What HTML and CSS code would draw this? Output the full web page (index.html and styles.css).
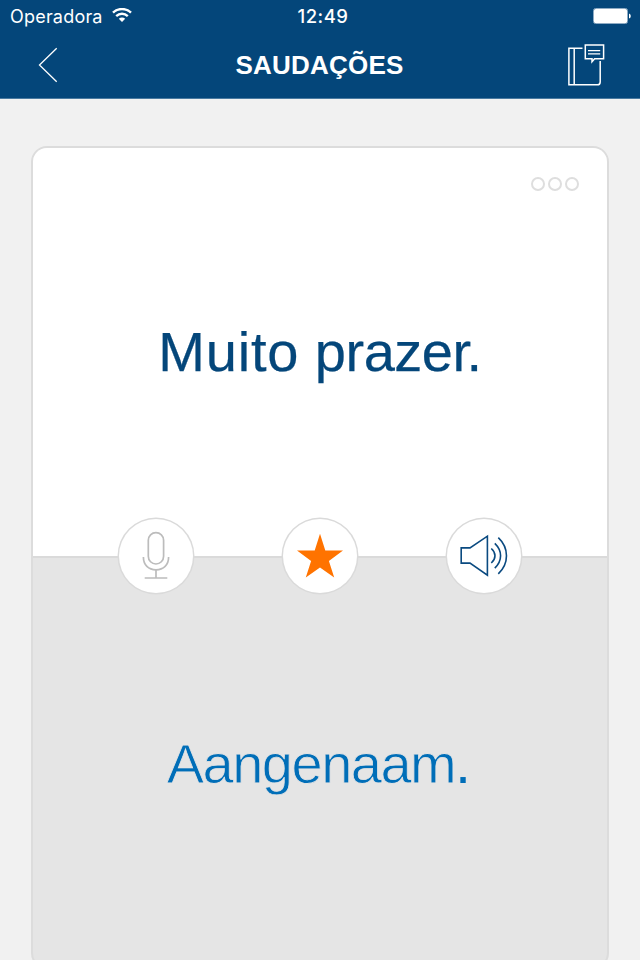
FILE: index.html
```html
<!DOCTYPE html>
<html lang="pt">
<head>
    <meta charset="UTF-8">
    <meta name="viewport" content="width=device-width, initial-scale=1.0">
    <title>Saudações</title>
    <link rel="stylesheet" href="styles.css">
</head>
<body>
    <header class="top">
        <div class="status-bar">
            <div class="carrier">
                <span class="carrier-name">Operadora</span>
                <svg class="wifi" width="20" height="14" viewBox="0 0 20 14" fill="none" stroke="#fff" stroke-width="2.4">
                    <path d="M1 4.7C6 -0.2 14 -0.2 19 4.7"/>
                    <path d="M4.2 8.2C7.6 5 12.4 5 15.8 8.2"/>
                    <path d="M6.8 10.8C8.6 9 11.4 9 13.2 10.8L10 14Z" fill="#fff" stroke="none"/>
                </svg>
            </div>
            <span class="clock">12:49</span>
            <svg class="battery" width="38" height="16" viewBox="0 0 38 16">
                <rect x="0.5" y="0.5" width="34" height="15" rx="2" fill="#04467a" stroke="#8eabc4"/>
                <rect x="1" y="1" width="33" height="14" rx="1.5" fill="#fff"/>
                <path d="M36 5.5Q37.8 6 37.8 8T36 10.5Z" fill="#fff"/>
            </svg>
        </div>
        <nav class="nav-bar">
            <svg class="back" width="20" height="36" viewBox="0 0 20 36" fill="none" stroke="#fff" stroke-width="1.3">
                <path d="M18.7 1.3L1.5 18L18.7 34.7"/>
            </svg>
            <h1 class="title">SAUDAÇÕES</h1>
            <svg class="book" width="38" height="44" viewBox="0 0 38 44" fill="none" stroke="#fff" stroke-width="1.5">
                <path d="M15.5 5.2H1.9V41.8H30.5Q33.2 41.8 33.2 38.9V18"/>
                <path d="M7.2 5.2V41.8"/>
                <path d="M18.3 1.9H36.6V15.8H27.6L25 18.7V15.8H18.3Z"/>
                <path d="M21 7.7H33.2M21 10.9H33.2" stroke-width="1.3"/>
            </svg>
        </nav>
    </header>

    <main class="card">
        <section class="half phrase">
            <div class="more"><i></i><i></i><i></i></div>
            <p class="phrase-text"><span class="loose">Muito</span> <span class="tight">praze<span class="kern">r</span>.</span></p>
        </section>
        <section class="half translation">
            <p class="translation-text">Aangenaam<span class="dot">.</span></p>
        </section>
        <div class="actions">
            <button class="action">
                <svg width="76" height="76" viewBox="0 0 76 76" fill="none" stroke="#bcbcbc" stroke-width="1.7">
                    <rect x="30.3" y="14.7" width="15.3" height="31.3" rx="7.65"/>
                    <path d="M25.4 39C25.4 47 30.5 51.8 38 51.8S50.6 47 50.6 39"/>
                    <path d="M38 51.8V60M26.7 60H49.3"/>
                </svg>
            </button>
            <button class="action">
                <svg width="76" height="76" viewBox="0 0 76 76" fill="#ff7300">
                    <path d="M38 15.7L43.3 32.4H61L46.9 42.9L52.2 59.6L38 49.4L23.8 59.6L29.1 42.9L15 32.4H32.7Z"/>
                </svg>
            </button>
            <button class="action">
                <svg width="76" height="76" viewBox="0 0 76 76" fill="none" stroke="#0a4a80" stroke-width="1.6">
                    <path d="M15.2 29.9H24L41.4 18.2V57.2L24 45.1H15.2Z"/>
                    <path d="M45.3 30.5C50.2 34.8 50.2 40.7 45.3 45M48.8 25.4C56.5 32.9 56.5 42.5 48.8 50.1M52.3 19.6C63.2 29.9 63.2 45.4 52.3 55.9"/>
                </svg>
            </button>
        </div>
    </main>
</body>
</html>
```

FILE: styles.css
```css
* {
    box-sizing: border-box;
}
body {
    margin: 0;
    height: 960px;
    overflow: hidden;
    background-color: #f1f1f1;
    font-family: "Liberation Sans", Arial, sans-serif;
}
.top {
    height: 99px;
    background-color: #04467a;
    border-bottom: 1px solid #4a7aa0;
    color: #fff;
}
.status-bar {
    display: grid;
    grid-template-columns: 1fr auto 1fr;
    align-items: center;
    height: 32px;
    padding: 0 9px 0 10px;
    font-family: Inter, sans-serif;
}
.carrier {
    display: flex;
    align-items: center;
    gap: 9px;
}
.carrier-name {
    font-size: 18px;
    font-weight: 400;
    letter-spacing: 0.2px;
}
.wifi {
    margin-top: -2px;
}
.clock {
    padding-left: 5px;
    font-size: 18.5px;
    font-weight: 500;
    letter-spacing: 0.5px;
}
.battery {
    justify-self: end;
}
.nav-bar {
    display: flex;
    justify-content: space-between;
    align-items: center;
    height: 66px;
    padding: 0 35px 0 38px;
}
.title {
    margin: 0 0 0 14px;
    font-size: 26px;
    font-weight: bold;
    letter-spacing: 0.2px;
    line-height: 66px;
}
.card {
    position: relative;
    width: 578px;
    height: 823px;
    margin: 47px auto 0;
    border: 2px solid #dcdcdc;
    border-radius: 16px;
    background-color: #e5e5e5;
    overflow: hidden;
}
.half {
    display: flex;
    justify-content: center;
    align-items: center;
    height: 410px;
}
.phrase {
    position: relative;
    background-color: #fff;
    border-bottom: 2px solid #dadada;
}
.half p {
    margin: 0;
    font-size: 56px;
    line-height: 64px;
    white-space: nowrap;
}
.phrase-text {
    color: #04467a;
    -webkit-text-stroke: 0.25px #04467a;
}
.loose {
    letter-spacing: 0.8px;
}
.tight {
    letter-spacing: -0.5px;
}
.kern {
    letter-spacing: -4.5px;
}
.half .translation-text {
    margin: 2px 4px 0 0;
    color: #006eb8;
    letter-spacing: -1.5px;
    -webkit-text-stroke: 0.8px #e5e5e5;
}
.dot {
    -webkit-text-stroke: 0;
}
.more {
    position: absolute;
    top: 29px;
    right: 28px;
    display: flex;
    gap: 3px;
}
.more i {
    width: 14px;
    height: 14px;
    border: 2px solid #dedede;
    border-radius: 50%;
}
.actions {
    position: absolute;
    top: 371px;
    left: 0;
    right: 0;
    display: flex;
    justify-content: center;
    gap: 90px;
}
.action {
    display: flex;
    justify-content: center;
    align-items: center;
    width: 74px;
    height: 74px;
    padding: 0;
    border: none;
    border-radius: 50%;
    background-color: #fff;
    box-shadow: 0 0 0 1.5px #dadada;
}
.action svg {
    flex: none;
}
```
